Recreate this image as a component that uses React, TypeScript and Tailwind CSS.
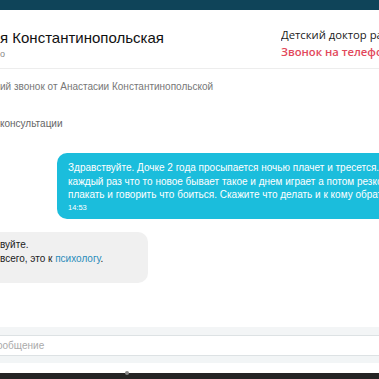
import React from "react";

export default function App() {
  return (
    <div
      className="w-[379px] h-[379px] overflow-hidden bg-white flex flex-col"
      style={{ fontFamily: '"Liberation Sans", Arial, sans-serif' }}
    >
      <div className="h-[10px] shrink-0 bg-[#0f4459]" />
      <div className="h-[59px] shrink-0 flex border-b border-[#ededed]">
        <div className="flex-1 min-w-0 pt-[18px] overflow-hidden whitespace-nowrap">
          <div className="text-[15px] leading-[19px] text-[#111]">я Константинопольская</div>
          <div className="text-[9px] leading-[12px] text-[#888] mt-[1px]">о</div>
        </div>
        <div
          className="w-[98px] shrink-0 pt-[17px] overflow-hidden whitespace-nowrap"
          style={{ fontFamily: '"Open Sans", sans-serif' }}
        >
          <div className="text-[11.25px] leading-[16px] font-medium text-[#1a1a1a]">Детский доктор работает</div>
          <div className="text-[11.25px] leading-[16px] font-semibold text-[#e2485b] mt-[1px]">Звонок на телефон</div>
        </div>
      </div>
      <div className="pt-[11px] text-[10px] leading-[13px] text-[#777] whitespace-nowrap overflow-hidden">
        ий звонок от Анастасии Константинопольской
      </div>
      <div className="pt-[24px] text-[10px] leading-[13px] text-[#666] whitespace-nowrap overflow-hidden">
        консультации
      </div>
      <div className="pt-[23px] pl-[57px] flex">
        <div className="flex-1 h-[66px] bg-[#1bbddc] rounded-l-[10px] pl-[11px] pt-[8px] text-white whitespace-nowrap overflow-hidden">
          <div className="text-[10px] leading-[13.5px]">Здравствуйте. Дочке 2 года просыпается ночью плачет и тресется.</div>
          <div className="text-[10px] leading-[13.5px]">каждый раз что то новое бывает такое и днем играет а потом резко начинает</div>
          <div className="text-[10px] leading-[13.5px]">плакать и говорить что боиться. Скажите что делать и к кому обратиться</div>
          <div className="text-[7.5px] leading-[12px]">14:53</div>
        </div>
      </div>
      <div className="pt-[13px] flex">
        <div className="w-[148px] h-[51px] bg-[#f0f0f0] rounded-r-[10px] pt-[6px] text-[#222] whitespace-nowrap overflow-hidden">
          <div className="text-[10px] leading-[14px]">вуйте.</div>
          <div className="text-[10px] leading-[14px]">
            всего, это к <span className="text-[#2a8cbb]">психологу</span>.
          </div>
        </div>
      </div>
      <div className="flex-1" />
      <div className="h-[8px] shrink-0 bg-[#f3f5f6]" />
      <div className="h-[21px] shrink-0 bg-white border-y border-[#dde2e4] flex items-center text-[10px] text-[#aaa] whitespace-nowrap overflow-hidden">
        <span className="-ml-[3px]">ообщение</span>
      </div>
      <div className="h-[7px] shrink-0 bg-[#f2f5f6]" />
      <div className="h-[10px] shrink-0 bg-white" />
      <div className="h-[6px] shrink-0 bg-[#242424] relative">
        <div className="absolute left-[125px] top-[-2px] w-[4px] h-[4px] rounded-full bg-[#888]" />
      </div>
    </div>
  );
}
